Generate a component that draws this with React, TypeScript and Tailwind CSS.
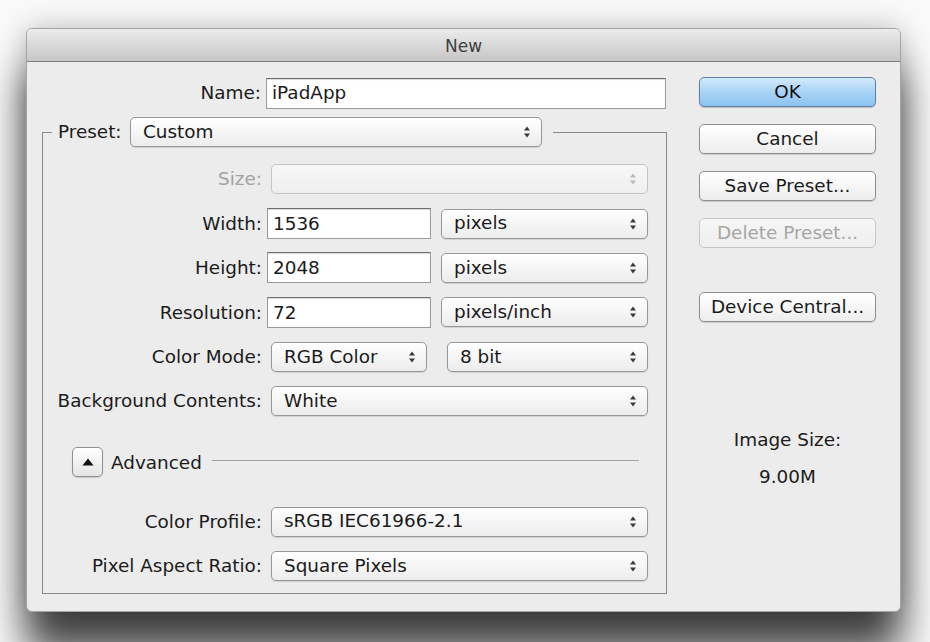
import React from "react";

function Arrows({ disabled }: { disabled?: boolean }) {
  const c = disabled ? "#b8b8b8" : "#3a3a3a";
  return (
    <svg width="8" height="14" viewBox="0 0 8 14">
      <path d="M4 1.5 L7 5.5 H1Z" fill={c} />
      <path d="M4 12.5 L7 8.5 H1Z" fill={c} />
    </svg>
  );
}

function Select({ text, w, disabled }: { text: string; w: string; disabled?: boolean }) {
  return (
    <div
      className={`${w} h-[30px] rounded-[5px] border ${
        disabled ? "border-[#c4c4c4] from-[#f7f7f7] to-[#efefef]" : "border-[#979797] from-white to-[#ececec] shadow-[0_1px_1px_rgba(0,0,0,0.12)]"
      } bg-gradient-to-b flex items-center justify-between pl-[12px] pr-[10px]`}
    >
      <span className="text-[#1b1b1b] leading-none">{text}</span>
      <Arrows disabled={disabled} />
    </div>
  );
}

function TextInput({ text, w }: { text: string; w: string }) {
  return (
    <div className={`${w} h-[31px] border border-[#9a9a9a] border-t-[#6e6e6e] bg-white shadow-[inset_0_1px_1px_rgba(0,0,0,0.15)] flex items-center pl-[5px] text-[#1b1b1b]`}>
      {text}
    </div>
  );
}

function Label({ text, disabled }: { text: string; disabled?: boolean }) {
  return (
    <div className={`w-[219px] shrink-0 text-right whitespace-nowrap ${disabled ? "text-[#a3a3a3]" : "text-[#1b1b1b]"}`}>{text}</div>
  );
}

function Row({ children }: { children: React.ReactNode }) {
  return <div className="h-[44.4px] flex items-center">{children}</div>;
}

function Button({ text, primary, disabled }: { text: string; primary?: boolean; disabled?: boolean }) {
  let cls = "border-[#8f8f8f] bg-gradient-to-b from-white to-[#ededed] text-[#1b1b1b] shadow-[0_1px_1px_rgba(0,0,0,0.15)]";
  if (primary)
    cls = "border-[#5f7fa6] bg-gradient-to-b from-[#d3e9fc] via-[#a9d3f6] to-[#8cc3f1] text-[#111] shadow-[0_1px_1px_rgba(0,0,0,0.2)]";
  if (disabled) cls = "border-[#c6c6c6] bg-gradient-to-b from-[#f6f6f6] to-[#eeeeee] text-[#a6a6a6]";
  return (
    <div className={`w-[177px] h-[30px] rounded-[5px] border ${cls} flex items-center justify-center whitespace-nowrap`}>{text}</div>
  );
}

export default function App() {
  return (
    <div className="w-[930px] h-[642px] overflow-hidden bg-[#fafafa] pt-[28px] pl-[26px] font-['DejaVu_Sans',sans-serif] text-[18.4px]">
      <div className="w-[875px] h-[584px] rounded-[6px] bg-[#ececec] border border-[#a5a5a5] shadow-[0_42px_40px_rgba(0,0,0,0.72),0_0_30px_rgba(0,0,0,0.25)] flex flex-col overflow-hidden">
        {/* title bar */}
        <div className="h-[33px] shrink-0 bg-gradient-to-b from-[#ececec] to-[#c6c6c6] border-b border-[#7d7d7d] flex items-center justify-center pt-[3px]">
          <span className="text-[17px] text-[#3f3f3f]">New</span>
        </div>
        {/* body */}
        <div className="flex pl-[15px]">
          {/* left */}
          <div className="w-[625px] flex flex-col pt-[16px]">
            <div className="flex items-center h-[30px]">
              <Label text="Name:" />
              <div className="ml-[5px]">
                <TextInput text="iPadApp" w="w-[400px]" />
              </div>
            </div>
            {/* group */}
            <div className="mt-[9px] flex flex-col">
              <div className="flex h-[30px]">
                <div className="w-[10px] h-[15px] self-end border-l border-t border-[#8a8a8a]" />
                <div className="ml-[6px] w-[66px] flex items-center text-[#1b1b1b]">Preset:</div>
                <div className="ml-[6px]">
                  <Select text="Custom" w="w-[412px]" />
                </div>
                <div className="ml-[11px] flex-1 h-[15px] self-end border-t border-r border-[#8a8a8a]" />
              </div>
              <div className="border-l border-r border-b border-[#8a8a8a] pt-[10px] pb-[5px]">
                <Row>
                  <Label text="Size:" disabled />
                  <div className="ml-[9px]">
                    <Select text="" w="w-[377px]" disabled />
                  </div>
                </Row>
                <Row>
                  <Label text="Width:" />
                  <div className="ml-[5px]">
                    <TextInput text="1536" w="w-[164px]" />
                  </div>
                  <div className="ml-[10px]">
                    <Select text="pixels" w="w-[207px]" />
                  </div>
                </Row>
                <Row>
                  <Label text="Height:" />
                  <div className="ml-[5px]">
                    <TextInput text="2048" w="w-[164px]" />
                  </div>
                  <div className="ml-[10px]">
                    <Select text="pixels" w="w-[207px]" />
                  </div>
                </Row>
                <Row>
                  <Label text="Resolution:" />
                  <div className="ml-[5px]">
                    <TextInput text="72" w="w-[164px]" />
                  </div>
                  <div className="ml-[10px]">
                    <Select text="pixels/inch" w="w-[207px]" />
                  </div>
                </Row>
                <Row>
                  <Label text="Color Mode:" />
                  <div className="ml-[9px]">
                    <Select text="RGB Color" w="w-[156px]" />
                  </div>
                  <div className="ml-[20px]">
                    <Select text="8 bit" w="w-[201px]" />
                  </div>
                </Row>
                <Row>
                  <Label text="Background Contents:" />
                  <div className="ml-[9px]">
                    <Select text="White" w="w-[377px]" />
                  </div>
                </Row>
                {/* advanced */}
                <div className="mt-[24px] h-[30px] flex items-center pl-[29px] pr-[27px]">
                  <div className="w-[31px] h-[30px] rounded-[5px] border border-[#8f8f8f] bg-gradient-to-b from-white to-[#e4e4e4] shadow-[0_1px_1px_rgba(0,0,0,0.15)] flex items-center justify-center">
                    <svg width="12" height="8" viewBox="0 0 12 8">
                      <path d="M6 0.5 L11.5 7.5 H0.5Z" fill="#111" />
                    </svg>
                  </div>
                  <span className="ml-[8px] text-[#1b1b1b]">Advanced</span>
                  <div className="ml-[10px] flex-1 h-px bg-[#a3a3a3] -translate-y-[2px]" />
                </div>
                <div className="mt-[22px]">
                  <Row>
                    <Label text="Color Profile:" />
                    <div className="ml-[9px]">
                      <Select text="sRGB IEC61966-2.1" w="w-[377px]" />
                    </div>
                  </Row>
                  <Row>
                    <Label text="Pixel Aspect Ratio:" />
                    <div className="ml-[9px]">
                      <Select text="Square Pixels" w="w-[377px]" />
                    </div>
                  </Row>
                </div>
              </div>
            </div>
          </div>
          {/* right */}
          <div className="ml-[32px] w-[177px] flex flex-col pt-[15px]">
            <div className="flex flex-col gap-[17px]">
              <Button text="OK" primary />
              <Button text="Cancel" />
              <Button text="Save Preset..." />
              <Button text="Delete Preset..." disabled />
            </div>
            <div className="mt-[44px]">
              <Button text="Device Central..." />
            </div>
            <div className="mt-[106px] text-center text-[#1b1b1b] leading-[24px]">Image Size:</div>
            <div className="mt-[13px] text-center text-[#1b1b1b] leading-[24px]">9.00M</div>
          </div>
        </div>
      </div>
    </div>
  );
}
